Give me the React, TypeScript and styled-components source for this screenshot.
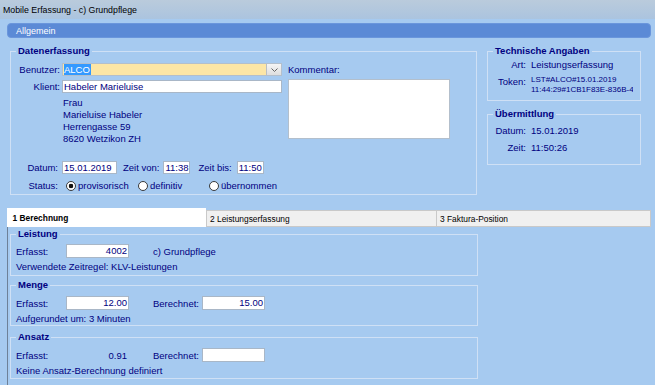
import React from 'react';
import styled, { createGlobalStyle } from 'styled-components';

const GlobalStyle = createGlobalStyle`
  html, body {
    margin: 0;
    padding: 0;
  }
  body {
    background: #a6caf0;
    font-family: "Liberation Sans", Arial, sans-serif;
    font-size: 9.5px;
    color: #000080;
    overflow: hidden;
  }
`;

const Window = styled.div`
  width: 655px;
  height: 385px;
  overflow: hidden;
  background: #a6caf0;
`;

const TitleBar = styled.div`
  height: 19px;
  display: flex;
  align-items: center;
  padding-left: 3px;
  font-size: 8.8px;
  color: #000;
  background: linear-gradient(#bacbdc, #abc4df);
`;

const Main = styled.div`
  padding: 4px 4px 0 7px;
`;

const SectionBar = styled.div`
  height: 15px;
  box-sizing: border-box;
  display: flex;
  align-items: center;
  padding-left: 8px;
  background: #5b8ad6;
  border: 1px solid #6a96dc;
  border-radius: 4px;
  color: #fff;
  font-size: 9px;
`;

const TopRow = styled.div`
  display: flex;
  align-items: flex-start;
  margin-top: 7px;
  padding-left: 3px;
`;

const Group = styled.fieldset<{ $w: number; $h: number; $mt?: number }>`
  box-sizing: border-box;
  width: ${p => p.$w}px;
  height: ${p => p.$h}px;
  margin: ${p => p.$mt || 0}px 0 0 0;
  padding: 0;
  min-width: 0;
  border: 1px solid #cfe0f5;
`;

const GroupTitle = styled.legend`
  margin-left: 5px;
  padding: 0 2px;
  font-weight: bold;
  font-size: 9.5px;
  line-height: 12px;
  color: #000080;
`;

/* Datenerfassung */
const UpperArea = styled.div`
  display: flex;
  margin-top: 6px;
`;

const LeftCol = styled.div`
  width: 272px;
  display: flex;
  flex-direction: column;
`;

const FieldRow = styled.div<{ $mt?: number; $h?: number }>`
  display: flex;
  align-items: center;
  height: ${p => p.$h || 13}px;
  margin-top: ${p => p.$mt || 0}px;
`;

const Label = styled.span<{ $w: number }>`
  flex: none;
  width: ${p => p.$w}px;
  box-sizing: border-box;
  padding-right: 2px;
  text-align: right;
  white-space: nowrap;
  line-height: 13px;
`;

const Combo = styled.div`
  display: flex;
  width: 220px;
  height: 13px;
  box-sizing: border-box;
  border: 1px solid #b3bfcc;
  background: #fce6a6;
`;

const ComboText = styled.div`
  flex: 1;
  display: flex;
  align-items: center;
  padding-left: 1px;
`;

const Selected = styled.span`
  background: #3399ff;
  color: #fff;
  line-height: 11px;
  padding-right: 1px;
`;

const ComboButton = styled.div`
  width: 14px;
  display: flex;
  align-items: center;
  justify-content: center;
  border-left: 1px solid #b9bec4;
  background: linear-gradient(#f5f5f5, #dedede);
`;

const TextBox = styled.div<{ $w: number; $h?: number; $align?: string; $ml?: number }>`
  flex: none;
  width: ${p => p.$w}px;
  height: ${p => p.$h || 13}px;
  margin-left: ${p => p.$ml || 0}px;
  box-sizing: border-box;
  border: 1px solid #a9b7c7;
  background: #fff;
  padding: 0 1px;
  text-align: ${p => p.$align || 'left'};
  line-height: ${p => (p.$h || 13) - 2}px;
  white-space: nowrap;
  overflow: hidden;
`;

const Address = styled.div`
  margin-top: 4px;
  padding-left: 52px;
  line-height: 12px;
`;

const CommentCol = styled.div`
  margin-left: 5px;
  display: flex;
  flex-direction: column;
`;

const CommentLabel = styled.div`
  line-height: 13px;
`;

const CommentArea = styled.div`
  margin-top: 3px;
  width: 162px;
  height: 60px;
  box-sizing: border-box;
  border: 1px solid #b3bfcc;
  background: #fff;
`;

const InlineText = styled.span<{ $ml?: number; $w?: number }>`
  flex: none;
  margin-left: ${p => p.$ml || 0}px;
  ${p => (p.$w ? `width: ${p.$w}px;` : '')}
  white-space: nowrap;
`;

const RadioGroup = styled.div`
  display: flex;
  align-items: center;
  margin-left: 6px;
`;

const RadioOption = styled.span<{ $w?: number }>`
  display: flex;
  align-items: center;
  ${p => (p.$w ? `width: ${p.$w}px;` : '')}
  white-space: nowrap;
`;

const RadioDot = styled.span<{ $on?: boolean }>`
  flex: none;
  width: 10px;
  height: 10px;
  box-sizing: border-box;
  margin-right: 2px;
  border-radius: 50%;
  border: 1px solid #3c3c3c;
  background: radial-gradient(circle, ${p => (p.$on ? '#111 0, #111 2px, #fff 2.6px' : '#fff 0')}, #fff 100%);
`;

/* right column */
const SideCol = styled.div`
  margin-left: 10px;
  width: 154px;
  display: flex;
  flex-direction: column;
`;

const InfoRow = styled.div<{ $mt: number }>`
  display: flex;
  align-items: flex-start;
  margin-top: ${p => p.$mt}px;
`;

const InfoLabel = styled.span`
  flex: none;
  width: 38px;
  text-align: right;
  line-height: 13px;
`;

const InfoValue = styled.span`
  margin-left: 5px;
  line-height: 13px;
  white-space: nowrap;
`;

const TokenText = styled.div`
  margin-left: 5px;
  width: 102px;
  overflow: hidden;
  white-space: nowrap;
  font-size: 8px;
  line-height: 10px;
`;

/* tabs */
const TabBar = styled.div`
  display: flex;
  align-items: flex-end;
  height: 19px;
  margin-top: 13px;
`;

const Tab = styled.div<{ $active?: boolean; $w: number; $last?: boolean }>`
  flex: none;
  width: ${p => p.$w}px;
  height: ${p => (p.$active ? 19 : 17)}px;
  box-sizing: border-box;
  display: flex;
  align-items: center;
  padding-left: ${p => (p.$active ? 5.5 : 3)}px;
  background: ${p => (p.$active ? '#fff' : '#f0f0f0')};
  border: ${p => (p.$active ? 'none' : '1px solid #c9c9c9')};
  border-right: ${p => (p.$last ? '1px solid #c9c9c9' : 'none')};
  color: #000;
  font-size: 8.4px;
  font-weight: ${p => (p.$active ? 'bold' : 'normal')};
  white-space: nowrap;
`;

const TabPanel = styled.div`
  height: 158px;
  box-sizing: border-box;
  border-left: 1px solid #6e8198;
  padding: 1px 0 0 2px;
`;

const ValueRow = styled.div<{ $mt: number }>`
  display: flex;
  align-items: center;
  height: 14px;
  margin-top: ${p => p.$mt}px;
  padding-left: 5px;
`;

const ValueCell = styled.span<{ $w: number; $ml?: number; $align?: string }>`
  flex: none;
  width: ${p => p.$w}px;
  margin-left: ${p => p.$ml || 0}px;
  text-align: ${p => p.$align || 'left'};
  box-sizing: border-box;
  padding-right: ${p => (p.$align === 'right' ? 2 : 0)}px;
  white-space: nowrap;
`;

const Note = styled.div`
  margin-top: 2px;
  padding-left: 5px;
  line-height: 14px;
`;

const Chevron = () => (
  <svg width="7" height="4" viewBox="0 0 7 4">
    <path d="M0.5 0.5 L3.5 3.5 L6.5 0.5" fill="none" stroke="#666" strokeWidth="1" />
  </svg>
);

export default function App() {
  return (
    <Window>
      <GlobalStyle />
      <TitleBar>Mobile Erfassung - c) Grundpflege</TitleBar>
      <Main>
        <SectionBar>Allgemein</SectionBar>

        <TopRow>
          <Group $w={467} $h={150}>
            <GroupTitle>Datenerfassung</GroupTitle>
            <UpperArea>
              <LeftCol>
                <FieldRow>
                  <Label $w={51}>Benutzer:</Label>
                  <Combo>
                    <ComboText>
                      <Selected>ALCO</Selected>
                    </ComboText>
                    <ComboButton>
                      <Chevron />
                    </ComboButton>
                  </Combo>
                </FieldRow>
                <FieldRow $mt={4}>
                  <Label $w={51}>Klient:</Label>
                  <TextBox $w={220}>Habeler Marieluise</TextBox>
                </FieldRow>
                <Address>
                  <div>Frau</div>
                  <div>Marieluise Habeler</div>
                  <div>Herrengasse 59</div>
                  <div>8620 Wetzikon ZH</div>
                </Address>
              </LeftCol>
              <CommentCol>
                <CommentLabel>Kommentar:</CommentLabel>
                <CommentArea />
              </CommentCol>
            </UpperArea>

            <FieldRow $mt={16}>
              <Label $w={49}>Datum:</Label>
              <TextBox $w={55} $ml={2}>15.01.2019</TextBox>
              <InlineText $ml={6}>Zeit von:</InlineText>
              <TextBox $w={27} $ml={4}>11:38</TextBox>
              <InlineText $ml={8}>Zeit bis:</InlineText>
              <TextBox $w={27} $ml={5}>11:50</TextBox>
            </FieldRow>
            <FieldRow $mt={5}>
              <Label $w={49}>Status:</Label>
              <RadioGroup>
                <RadioOption $w={72}>
                  <RadioDot $on />
                  provisorisch
                </RadioOption>
                <RadioOption $w={71}>
                  <RadioDot />
                  definitiv
                </RadioOption>
                <RadioOption>
                  <RadioDot />
                  übernommen
                </RadioOption>
              </RadioGroup>
            </FieldRow>
          </Group>

          <SideCol>
            <Group $w={154} $h={56}>
              <GroupTitle>Technische Angaben</GroupTitle>
              <InfoRow $mt={1}>
                <InfoLabel>Art:</InfoLabel>
                <InfoValue>Leistungserfassung</InfoValue>
              </InfoRow>
              <InfoRow $mt={4}>
                <InfoLabel>Token:</InfoLabel>
                <TokenText>
                  <div>LST#ALCO#15.01.2019</div>
                  <div>11:44:29#1CB1F83E-836B-4C7A</div>
                </TokenText>
              </InfoRow>
            </Group>
            <Group $w={154} $h={57} $mt={7}>
              <GroupTitle>Übermittlung</GroupTitle>
              <InfoRow $mt={4}>
                <InfoLabel>Datum:</InfoLabel>
                <InfoValue>15.01.2019</InfoValue>
              </InfoRow>
              <InfoRow $mt={4}>
                <InfoLabel>Zeit:</InfoLabel>
                <InfoValue>11:50:26</InfoValue>
              </InfoRow>
            </Group>
          </SideCol>
        </TopRow>

        <TabBar>
          <Tab $active $w={199}>1 Berechnung</Tab>
          <Tab $w={230}>2 Leistungserfassung</Tab>
          <Tab $w={215} $last>3 Faktura-Position</Tab>
        </TabBar>

        <TabPanel>
          <Group $w={468} $h={48}>
            <GroupTitle>Leistung</GroupTitle>
            <ValueRow $mt={4}>
              <ValueCell $w={50}>Erfasst:</ValueCell>
              <TextBox $w={63} $h={14} $align="right">4002</TextBox>
              <ValueCell $w={120} $ml={24}>c) Grundpflege</ValueCell>
            </ValueRow>
            <Note>Verwendete Zeitregel: KLV-Leistungen</Note>
          </Group>

          <Group $w={468} $h={47} $mt={3}>
            <GroupTitle>Menge</GroupTitle>
            <ValueRow $mt={5}>
              <ValueCell $w={50}>Erfasst:</ValueCell>
              <TextBox $w={63} $h={14} $align="right">12.00</TextBox>
              <ValueCell $w={49} $ml={24}>Berechnet:</ValueCell>
              <TextBox $w={63} $h={14} $align="right">15.00</TextBox>
            </ValueRow>
            <Note>Aufgerundet um: 3 Minuten</Note>
          </Group>

          <Group $w={468} $h={48} $mt={5}>
            <GroupTitle>Ansatz</GroupTitle>
            <ValueRow $mt={5}>
              <ValueCell $w={50}>Erfasst:</ValueCell>
              <ValueCell $w={63} $align="right">0.91</ValueCell>
              <ValueCell $w={49} $ml={24}>Berechnet:</ValueCell>
              <TextBox $w={63} $h={14} />
            </ValueRow>
            <Note>Keine Ansatz-Berechnung definiert</Note>
          </Group>
        </TabPanel>
      </Main>
    </Window>
  );
}
